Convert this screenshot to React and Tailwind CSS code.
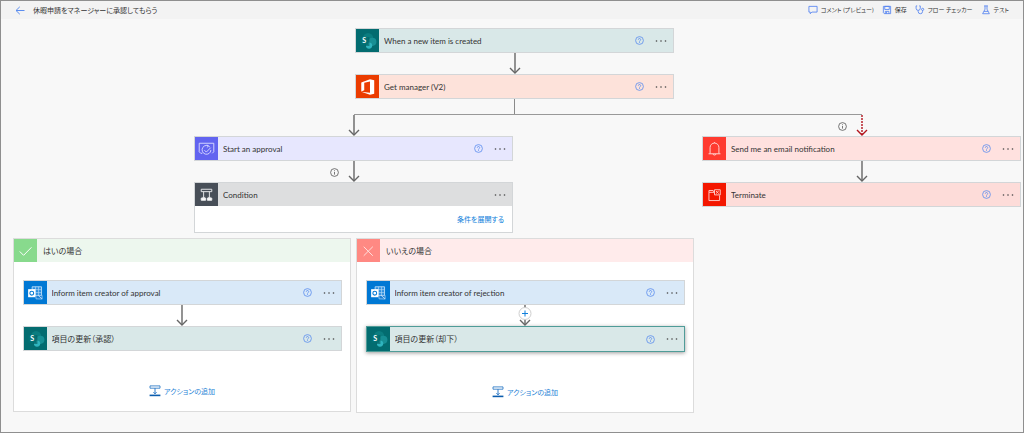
import clsx from "clsx";

const SharePointIcon = () => (
  <svg viewBox="0 0 24 24" className="size-6">
    <circle cx="12.6" cy="9" r="5.4" fill="#0b7d80" />
    <circle cx="17" cy="12.8" r="4.3" fill="#178f94" />
    <circle cx="13.6" cy="16.8" r="3.3" fill="#2fb4be" />
    <path d="M8 8h6v9.2H9.6V15H8z" fill="#03585b" opacity="0.6" />
    <rect x="4.5" y="8" width="8" height="8" rx="0.7" fill="#037175" />
    <text x="8.5" y="14.6" textAnchor="middle" fontSize="7.5" fontWeight="700" fill="#fff">
      S
    </text>
  </svg>
);

const OfficeIcon = () => (
  <svg viewBox="0 0 24 24" className="size-6">
    <path
      d="M5.5 7.2 14.6 3.8 19 5v14l-4.4 1.2-9.1-3.3 9.1 1.2V6.2L8.6 7.6v7.9l-3.1 1.3z"
      fill="#fff"
    />
  </svg>
);

const ApprovalIcon = () => (
  <svg viewBox="0 0 24 24" className="size-6" fill="none" stroke="#d5d6ff" strokeWidth="1">
    <path d="M7.6 16.5H6l-1.6-1.6V6h15.2v8.9L18 16.5" />
    <path d="M15.5 9.9A4.6 4.6 0 1 0 16.6 13" />
    <path d="m9.8 13.2 2 2 4.6-4.6M12.4 7.6l1.6 1.4-1.6 1.4" />
  </svg>
);

const ConditionIcon = () => (
  <svg viewBox="0 0 24 24" className="size-6" fill="none" stroke="#e9eaec" strokeWidth="1">
    <path d="M6.5 6h11v2.5h-11zM9 8.5V15M15 8.5V15" />
    <path d="M6.5 15.2h4.6v2.3H6.5zM12.9 15.2h4.6v2.3h-4.6z" fill="#fff" />
    <path d="m7.8 14 1.2 1.2 1.2-1.2M13.8 14l1.2 1.2 1.2-1.2" />
  </svg>
);

const BellIcon = () => (
  <svg viewBox="0 0 24 24" className="size-6" fill="none" stroke="#ffd9d6" strokeWidth="1">
    <path d="M5.8 17h12.4M7.4 16.8V10.4a4.6 4.6 0 0 1 9.2 0v6.4M10.4 17.2a1.7 1.7 0 0 0 3.2 0" />
    <path d="M12 5.6V4.8" />
  </svg>
);

const TerminateIcon = () => (
  <svg viewBox="0 0 24 24" className="size-6" fill="none" stroke="#ffc9c4" strokeWidth="1">
    <path d="M11.5 9.2H6.2v8.6h11.1v-5.4M6.2 9.2V7.3h4.4l.9 1.9" />
    <path d="M12 6.5h6v5.4h-6zM13.6 7.9l2.8 2.6M16.4 7.9l-2.8 2.6" />
  </svg>
);

const OutlookIcon = () => (
  <svg viewBox="0 0 24 24" className="size-6">
    <path d="M8.5 5.5h9.8v9.2H8.5z" fill="#2b8fe0" stroke="#d8ebfb" strokeWidth="0.8" />
    <path d="M8.5 8.5h9.8M8.5 11.6h9.8M12 5.5v9M15.2 5.5v9" stroke="#b5d8f6" strokeWidth="0.7" />
    <path d="M12.5 14.5h6.4v3.8l-6.4-.2z" fill="#1b7fd4" stroke="#b5d8f6" strokeWidth="0.7" />
    <path d="m14.5 14.2 4.4 4" stroke="#d8ebfb" strokeWidth="0.8" />
    <path d="M4.3 8h7.6v8.4H4.3z" fill="#fff" />
    <circle cx="8.1" cy="12.2" r="2" fill="none" stroke="#0078d4" strokeWidth="1.1" />
  </svg>
);

const CheckIcon = () => (
  <svg viewBox="0 0 24 24" className="size-6" fill="none" stroke="#fff" strokeWidth="1">
    <path d="m6 12.5 4 4L18.2 8.2" />
  </svg>
);

const CrossIcon = () => (
  <svg viewBox="0 0 24 24" className="size-6" fill="none" stroke="#ffe3e1" strokeWidth="1">
    <path d="m7 7.5 9.5 9.5M16.5 7.5 7 17" />
  </svg>
);

const AddStepIcon = () => (
  <svg viewBox="0 0 12 12" className="size-3" fill="none" stroke="#1b6ec2">
    <path d="M1 .9h10v2.3H1z" strokeWidth="0.8" />
    <path d="M6 3.2v5.6M4.4 7.2 6 8.8l1.6-1.6" strokeWidth="0.9" />
    <path d="M.6 9.6h10.8v1.6H.6z" fill="#0b5cad" stroke="none" />
  </svg>
);

const toolbar = [
  {
    label: "コメント (プレビュー)",
    icon: <path d="M1 1.5h9v6.3H4.3L2.5 9.6V7.8H1z" />,
  },
  {
    label: "保存",
    icon: (
      <>
        <path d="M1.5 1.5h8v8h-7l-1-1z" />
        <path d="M3 1.5h5v3.4H3zM3.6 9.5V7h4v2.5M5 7.4v2" />
      </>
    ),
  },
  {
    label: "フロー チェッカー",
    icon: (
      <>
        <path d="M2.4 1H1.2v2.6a2.3 2.3 0 0 0 4.6 0V1H4.6M3.5 6v1.2a2.4 2.4 0 0 0 4.8 0V6" />
        <circle cx="8.4" cy="4.8" r="1.2" />
      </>
    ),
  },
  {
    label: "テスト",
    icon: (
      <>
        <path d="M3.4 1h4.2M4.4 1v3.6L1.8 9.6h7.4L6.6 4.6V1" />
        <path d="M3.3 7h4.4" />
      </>
    ),
  },
];

function Arrow({ danger }) {
  return (
    <svg
      viewBox="0 0 12 21"
      className="block h-[21px] w-3"
      fill="none"
      stroke={danger ? "#b3141d" : "#666"}
      strokeWidth="1.4"
    >
      <path d="M6 0v20" strokeDasharray={danger ? "2 1" : undefined} />
      <path d="m1 15 5 5 5-5" />
    </svg>
  );
}

function Connector({ danger, info, add }) {
  return (
    <div className="relative flex justify-center">
      <Arrow danger={danger} />
      {info && (
        <button
          aria-label="Run after"
          className="absolute top-1/2 left-1/2 -mt-1 -ml-6 flex size-[9px] items-center justify-center"
        >
          <svg viewBox="0 0 9 9" className="size-[9px]" fill="none" stroke="#555" strokeWidth="0.8">
            <circle cx="4.5" cy="4.5" r="3.9" />
            <path d="M4.5 4v2.6M4.5 2.3v.9" />
          </svg>
        </button>
      )}
      {add && (
        <button
          aria-label="Insert step"
          className="absolute top-0.5 left-1/2 flex size-[13px] -translate-x-1/2 items-center justify-center rounded-full border border-[#cfcfcf] bg-white"
        >
          <svg viewBox="0 0 7 7" className="size-[7px]" stroke="#0f7fdb" strokeWidth="1">
            <path d="M3.5 .5v6M.5 3.5h6" />
          </svg>
        </button>
      )}
    </div>
  );
}

function Step({ title, icon, iconBg, bg, help = true, selected, children }) {
  return (
    <div
      className={clsx(
        "mx-auto w-full max-w-[319px] border bg-white",
        selected
          ? "border-[#4f9c98] shadow-[0_1px_4px_rgba(0,0,0,0.4)]"
          : "border-[#d3d6d8]"
      )}
    >
      <div className={clsx("flex items-center", selected ? "h-6" : "h-[23px]", bg)}>
        <div
          className={clsx(
            "flex h-full w-[23px] shrink-0 items-center justify-center overflow-hidden",
            iconBg
          )}
        >
          {icon}
        </div>
        <span className="ml-[5px] flex-1 truncate">{title}</span>
        {help && (
          <button aria-label="Help" className="mr-[11px]">
            <svg viewBox="0 0 9 9" className="size-[9px]" fill="none" stroke="#5b8def" strokeWidth="0.8">
              <circle cx="4.5" cy="4.5" r="3.9" />
              <path d="M3.3 3.7a1.2 1.2 0 1 1 1.8 1c-.5.3-.6.4-.6.9M4.5 6.2v.8" />
            </svg>
          </button>
        )}
        <button aria-label="Menu" className="mr-1.5">
          <svg viewBox="0 0 12 4" className="h-1 w-3" fill="#444">
            <circle cx="1.5" cy="2" r="0.8" />
            <circle cx="6" cy="2" r="0.8" />
            <circle cx="10.5" cy="2" r="0.8" />
          </svg>
        </button>
      </div>
      {children}
    </div>
  );
}

function Branch({ title, icon, iconBg, bg, children }) {
  return (
    <section className="min-w-0 flex-1 border border-[#dcdcdc] bg-white">
      <header className={clsx("flex h-[23px] items-center", bg)}>
        <div
          className={clsx(
            "flex h-full w-[23px] shrink-0 items-center justify-center overflow-hidden",
            iconBg
          )}
        >
          {icon}
        </div>
        <h2 className="ml-1.5">{title}</h2>
      </header>
      <div className="px-2 pt-[18px] pb-3.5">
        {children}
        <button className="mx-auto mt-[34px] flex items-center gap-[3px] text-[7px] text-[#1f83d6]">
          <AddStepIcon />
          アクションの追加
        </button>
      </div>
    </section>
  );
}

export default function App() {
  return (
    <div className="min-h-screen border border-[#8f8f8f] bg-[#f8f8f8] font-['Lato','Noto_Sans_CJK_JP',sans-serif] text-[8px] leading-3 text-[#333] [font-feature-settings:'palt']">
      <header className="flex h-[18px] items-center justify-between bg-[#f3f3f3] pr-3.5 pl-3.5">
        <div className="flex items-center gap-2">
          <button aria-label="Back">
            <svg viewBox="0 0 10 9" className="h-[9px] w-2.5" fill="none" stroke="#5b8def" strokeWidth="1">
              <path d="M9.5 4.5H1M4.8.8 1 4.5l3.8 3.7" />
            </svg>
          </button>
          <h1 className="text-[7px]">休暇申請をマネージャーに承認してもらう</h1>
        </div>
        <nav className="flex items-center gap-2 text-[6px]">
          {toolbar.map((item) => (
            <button key={item.label} className="flex items-center gap-[3px]">
              <svg viewBox="0 0 11 11" className="size-2.5" fill="none" stroke="#4f7ff0" strokeWidth="0.9">
                {item.icon}
              </svg>
              {item.label}
            </button>
          ))}
        </nav>
      </header>

      <main className="pt-[9px] pr-0.5 pb-3 pl-3">
        {/* Trigger */}
        <div className="pr-[5px]">
          <Step
            title="When a new item is created"
            icon={<SharePointIcon />}
            iconBg="bg-[#036c70]"
            bg="bg-[#d9e8e8]"
          />
          <Connector />
          <Step
            title="Get manager (V2)"
            icon={<OfficeIcon />}
            iconBg="bg-[#eb3c00]"
            bg="bg-[#fde2da]"
          />
          <div className="mx-auto h-[15px] w-px bg-[#8a8a8a]" />
        </div>

        {/* Parallel branches */}
        <div className="flex items-start gap-2">
          <div className="min-w-0 flex-1">
            <div className="-mr-2 ml-[50%] h-px bg-[#999]" />
            <Connector />
            <Step
              title="Start an approval"
              icon={<ApprovalIcon />}
              iconBg="bg-[#6264f0]"
              bg="bg-[#e7e7fe]"
            />
            <Connector info />
            <Step
              title="Condition"
              icon={<ConditionIcon />}
              iconBg="bg-[#484f58]"
              bg="bg-[#dddedf]"
              help={false}
            >
              <div className="flex h-[26px] items-center justify-end pr-2">
                <button className="text-[7px] text-[#0f7fdb]">条件を展開する</button>
              </div>
            </Step>

            <div className="mt-[5px] flex items-start gap-[5px]">
              <Branch
                title="はいの場合"
                icon={<CheckIcon />}
                iconBg="bg-[#88da8d]"
                bg="bg-[#edf7ee]"
              >
                <Step
                  title="Inform item creator of approval"
                  icon={<OutlookIcon />}
                  iconBg="bg-[#0078d4]"
                  bg="bg-[#d9e9f8]"
                />
                <Connector />
                <Step
                  title="項目の更新（承認）"
                  icon={<SharePointIcon />}
                  iconBg="bg-[#036c70]"
                  bg="bg-[#d9e8e8]"
                />
              </Branch>
              <Branch
                title="いいえの場合"
                icon={<CrossIcon />}
                iconBg="bg-[#ff8983]"
                bg="bg-[#ffebeb]"
              >
                <Step
                  title="Inform item creator of rejection"
                  icon={<OutlookIcon />}
                  iconBg="bg-[#0078d4]"
                  bg="bg-[#d9e9f8]"
                />
                <Connector add />
                <Step
                  title="項目の更新（却下）"
                  icon={<SharePointIcon />}
                  iconBg="bg-[#036c70]"
                  bg="bg-[#d9e8e8]"
                  selected
                />
              </Branch>
            </div>
          </div>

          <div className="w-[319px] shrink-0">
            <div className="mr-[50%] h-px bg-[#999]" />
            <Connector danger info />
            <Step
              title="Send me an email notification"
              icon={<BellIcon />}
              iconBg="bg-[#ff3b30]"
              bg="bg-[#ffe1df]"
            />
            <Connector />
            <Step
              title="Terminate"
              icon={<TerminateIcon />}
              iconBg="bg-[#f41700]"
              bg="bg-[#fddcd9]"
            />
          </div>
        </div>
      </main>
    </div>
  );
}
